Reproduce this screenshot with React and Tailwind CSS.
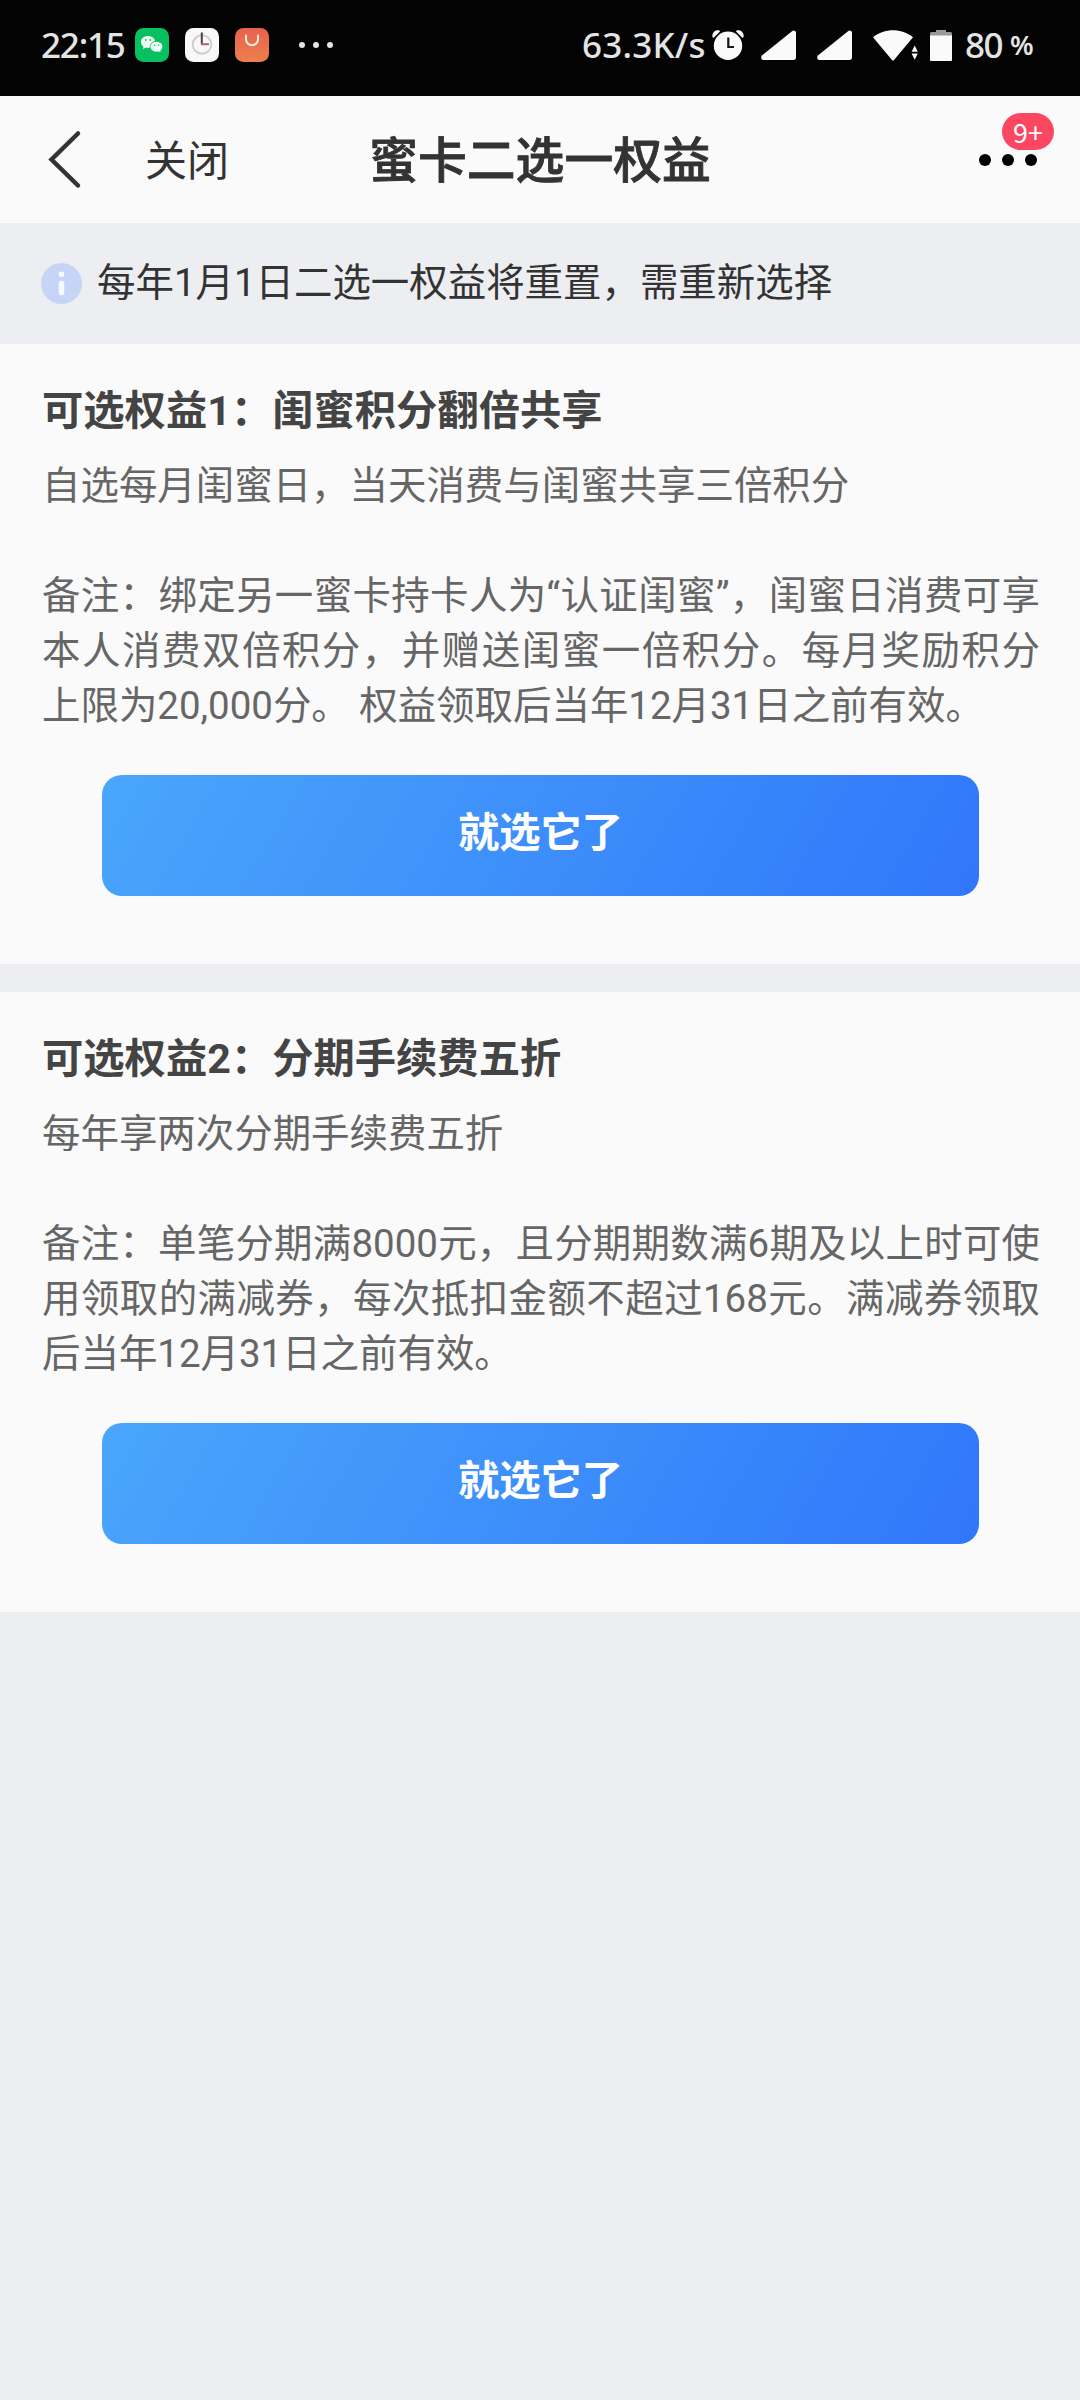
import React from "react";

const benefits = [
  {
    title: "可选权益1：闺蜜积分翻倍共享",
    summary: "自选每月闺蜜日，当天消费与闺蜜共享三倍积分",
    note: "备注：绑定另一蜜卡持卡人为“认证闺蜜”，闺蜜日消费可享本人消费双倍积分，并赠送闺蜜一倍积分。每月奖励积分上限为20,000分。 权益领取后当年12月31日之前有效。",
  },
  {
    title: "可选权益2：分期手续费五折",
    summary: "每年享两次分期手续费五折",
    note: "备注：单笔分期满8000元，且分期期数满6期及以上时可使用领取的满减券，每次抵扣金额不超过168元。满减券领取后当年12月31日之前有效。",
  },
];

const WechatIcon = () => (
  <svg className="w-[34px] h-[34px] ml-[10px]" viewBox="0 0 34 34">
    <rect width="34" height="34" rx="8.5" fill="#07c160" />
    <path
      d="M13 8c-4 0-7 2.600-7 5.900 0 1.900 1 3.500 2.500 4.600L8 20.900l2.800-1.400c.7.2 1.400.3 2.200.3 4 0 7-2.600 7-5.900S17 8 13 8z"
      fill="#f4fff8"
    />
    <path
      d="M21.500 13.400c3.700 0 6.300 2.300 6.300 5.200 0 1.700-.8 3.100-2.100 4.100l.4 2.300-2.500-1.200c-.7.2-1.300.3-2.100.3-3.600 0-6.300-2.400-6.300-5.500s2.700-5.200 6.300-5.200z"
      fill="#f4fff8"
      stroke="#07c160"
      strokeWidth="0.9"
    />
    <g fill="#07c160">
      <circle cx="10.800" cy="12" r="0.9" />
      <circle cx="15.300" cy="12" r="0.9" />
      <circle cx="19.500" cy="17.300" r="0.8" />
      <circle cx="23.600" cy="17.300" r="0.8" />
    </g>
  </svg>
);

const ClockAppIcon = () => (
  <svg className="w-[34px] h-[34px] ml-4" viewBox="0 0 34 34" fill="none">
    <rect width="34" height="34" rx="8.5" fill="#f8f8f8" />
    <circle cx="17" cy="16.500" r="9.300" stroke="#cfcfcf" strokeWidth="2" />
    <path d="M16.800 4.500v12" stroke="#4a4046" strokeWidth="2" />
    <path d="M16 16.200h8" stroke="#b2606a" strokeWidth="2" />
  </svg>
);

const StoreIcon = () => (
  <svg className="w-[34px] h-[34px] ml-4" viewBox="0 0 34 34" fill="none">
    <defs>
      <linearGradient id="store" x1="0" y1="0" x2="0" y2="1">
        <stop offset="0" stopColor="#e8604f" />
        <stop offset="1" stopColor="#ed804c" />
      </linearGradient>
    </defs>
    <rect width="34" height="34" rx="8.5" fill="url(#store)" />
    <path
      d="M11 7.500v3.800a6 6 0 0 0 12 0V7.500"
      stroke="#ffece4"
      strokeWidth="2"
      strokeLinecap="round"
    />
  </svg>
);

const AlarmIcon = () => (
  <svg className="w-8 h-8" viewBox="0 0 32 32">
    <g fill="#fafafa">
      <path d="M0.700 8.600C-0.700 4.500 2.500.3 7 1.300L8.200 2.200 1.800 8.800z" />
      <path d="M31.300 8.600C32.700 4.500 29.500.3 25 1.300l-1.200.9 6.400 6.600z" />
      <circle cx="16" cy="16.800" r="14.200" />
    </g>
    <path d="M16.300 8.500V18H22" stroke="#151515" strokeWidth="2.200" fill="none" />
  </svg>
);

const SignalIcon = ({ className }) => (
  <svg className={className} viewBox="0 0 35 30">
    <path
      d="M1.200 25.200 31 1.200C33 -.3 35 .8 35 3v24.500c0 1.500-1 2.500-2.500 2.500H2.400C0 30-.6 26.800 1.200 25.200z"
      fill="#fafafa"
    />
  </svg>
);

const WifiIcon = () => (
  <svg className="w-[46px] h-[31px] ml-[21px]" viewBox="0 0 46 31">
    <g fill="#fafafa">
      <path d="M0 7.200C11.500-2 28.500-2 40 7.200L20.800 30.300c-.5.600-1.100.600-1.600 0z" />
      <path d="M38.600 21.700 41.700 15.500 44.800 21.700zM38.600 23.500 41.700 29.700 44.800 23.500z" />
    </g>
  </svg>
);

const BatteryIcon = () => (
  <svg className="w-[22px] h-[31px] ml-[11px]" viewBox="0 0 22 31">
    <path d="M6 0h10v2h4.500Q22 2 22 3.500V6H0V3.500Q0 2 1.500 2H6z" fill="#999" />
    <path d="M0 5.500h22V30q0 1-1 1H1q-1 0-1-1z" fill="#fafafa" />
  </svg>
);

const StatusBar = () => (
  <div className="flex items-center h-24 pl-[41px] pb-[6px] bg-[#030303] text-[#e4e4e4] font-['Noto_Sans','Noto_Sans_CJK_SC',sans-serif] font-medium text-[35px]">
    <span className="w-[84px] whitespace-nowrap tracking-[-1.2px]">22:15</span>
    <WechatIcon />
    <ClockAppIcon />
    <StoreIcon />
    <div className="flex gap-2 ml-[30px]">
      <i className="w-[6px] h-[6px] rounded-full bg-[#e4e4e4]" />
      <i className="w-[6px] h-[6px] rounded-full bg-[#e4e4e4]" />
      <i className="w-[6px] h-[6px] rounded-full bg-[#e4e4e4]" />
    </div>
    <span className="w-[130px] ml-[249px] whitespace-nowrap tracking-[0.2px]">
      63.3K/s
    </span>
    <AlarmIcon />
    <SignalIcon className="w-[35px] h-[30px] ml-[17px]" />
    <SignalIcon className="w-[35px] h-[30px] ml-[21px]" />
    <WifiIcon />
    <BatteryIcon />
    <span className="w-[45px] ml-[13px] tracking-[-1.5px]">80</span>
    <span className="text-[27px] font-semibold">%</span>
  </div>
);

const NavBar = () => (
  <div className="grid grid-cols-[360px_1fr_360px] items-center h-[127px] bg-[#fafafa] text-[#333]">
    <div className="flex items-center">
      <svg
        className="w-9 h-[60px] ml-[47px]"
        viewBox="0 0 36 60"
        fill="none"
        stroke="#333"
        strokeWidth="4.500"
        strokeLinecap="round"
      >
        <path d="M31 3.500 4.500 29.500 31 55.500" />
      </svg>
      <span className="ml-[62px] pt-1 text-[42px]">关闭</span>
    </div>
    <h1 className="pt-[5px] text-center text-[48.8px] font-medium whitespace-nowrap [-webkit-text-stroke:0.8px_#333]">
      蜜卡二选一权益
    </h1>
    <div className="relative flex gap-[11px] justify-end pr-[43px]">
      <i className="w-3 h-3 rounded-full bg-black" />
      <i className="w-3 h-3 rounded-full bg-black" />
      <i className="w-3 h-3 rounded-full bg-black" />
      <span className="absolute right-[26px] -top-[41px] w-[52px] h-[37px] rounded-full bg-[#fc4762] text-white text-[27px] leading-[37px] text-center font-['Noto_Sans_CJK_SC',sans-serif]">
        9+
      </span>
    </div>
  </div>
);

const Notice = () => (
  <div className="flex items-center h-[121px] pl-[41px] bg-[#edeef2] text-[#333]">
    <svg className="w-[41px] h-[41px]" viewBox="0 0 41 41">
      <circle cx="20.500" cy="20.500" r="20.500" fill="#c6d5f6" />
      <circle cx="20.500" cy="11.300" r="2.800" fill="#f6f9ff" />
      <rect x="17.700" y="17.800" width="5.600" height="14.500" rx="2.800" fill="#f6f9ff" />
    </svg>
    <p className="ml-[15px] pb-[2px] text-[38.45px] leading-[55px]">
      每年1月1日二选一权益将重置，需重新选择
    </p>
  </div>
);

const BenefitCard = ({ title, summary, note }) => (
  <section className="h-[620px] pl-[42px] pr-10 pt-10 bg-[#fafafa]">
    <h2 className="text-[41.3px] leading-[55px] font-bold text-[#444]">
      {title}
    </h2>
    <div className="mt-[19px] text-[38.45px] leading-[55px] text-[#666]">
      <p>{summary}</p>
      <p className="mt-[55px] text-justify">{note}</p>
    </div>
    <button className="block w-[877px] h-[121px] ml-[60px] mt-[42px] pb-[3px] rounded-[20px] bg-linear-[120deg] from-[#4aa6fb] to-[#3077fa] text-[41.3px] font-bold text-white">
      就选它了
    </button>
  </section>
);

const App = () => {
  return (
    <div className="w-[1080px] min-h-[2400px] bg-[#edeef2] font-['Roboto','Noto_Sans_CJK_SC',sans-serif]">
      <StatusBar />
      <NavBar />
      <Notice />
      <div className="flex flex-col gap-7">
        {benefits.map((item) => (
          <BenefitCard key={item.title} {...item} />
        ))}
      </div>
    </div>
  );
};

export default App;
